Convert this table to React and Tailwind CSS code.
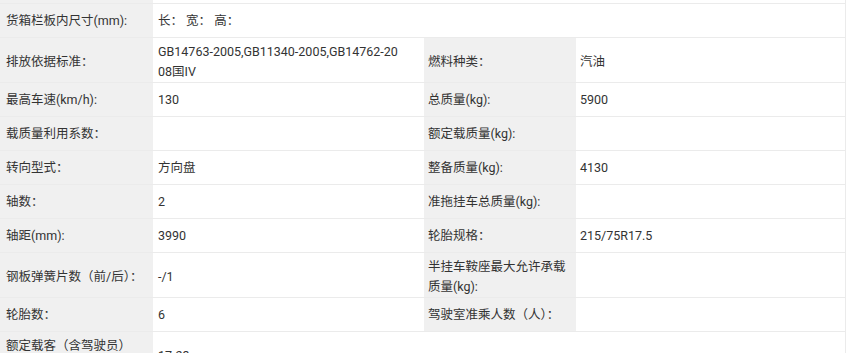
const rows = [
    { label: '货箱栏板内尺寸(mm):', value: '长： 宽： 高：', span: true },
    {
        label: '排放依据标准：',
        value: (
            <span className="whitespace-nowrap">
                GB14763-2005,GB11340-2005,GB14762-20
                <br />
                08国IV
            </span>
        ),
        label2: '燃料种类：',
        value2: '汽油',
        tall: true,
    },
    { label: '最高车速(km/h):', value: '130', label2: '总质量(kg):', value2: '5900' },
    { label: '载质量利用系数：', value: '', label2: '额定载质量(kg):', value2: '' },
    { label: '转向型式：', value: '方向盘', label2: '整备质量(kg):', value2: '4130' },
    { label: '轴数：', value: '2', label2: '准拖挂车总质量(kg):', value2: '' },
    { label: '轴距(mm):', value: '3990', label2: '轮胎规格：', value2: '215/75R17.5' },
    { label: '钢板弹簧片数（前/后）：', value: '-/1', label2: '半挂车鞍座最大允许承载质量(kg):', value2: '', tall: true },
    { label: '轮胎数：', value: '6', label2: '驾驶室准乘人数（人）：', value2: '' },
    { label: '额定载客（含驾驶员）(人):', value: '17-23', span: true, tall: true },
];

const App = () => {
    return (
        <div
            className="w-[852px] h-[353px] overflow-hidden bg-white text-[#333] text-[12.5px] leading-[20px]"
            style={{ fontFamily: 'Roboto, "Noto Sans CJK SC", sans-serif' }}
        >
            <div className="w-[846px] border-r border-[#ebebeb] grid grid-cols-[153px_271px_152px_269px]">
                {/* clipped previous row */}
                <div className="h-[4px] bg-[#f0f0f0] border-b border-[#ebebeb]" />
                <div className="h-[4px] col-span-3 border-b border-[#ebebeb]" />

                {rows.map((r, i) => {
                    const cell = `min-h-[34px] flex items-center border-b border-[#ebebeb] ${
                        r.tall ? 'pt-[4px] pb-0' : 'py-[2px]'
                    }`;
                    return (
                        <div key={i} className="contents">
                            <div className={`${cell} bg-[#f0f0f0] pl-[6px] pr-[4px]`}>{r.label}</div>
                            {r.span ? (
                                <div className={`${cell} col-span-3 pl-[5px] pr-[4px]`}>{r.value}</div>
                            ) : (
                                <>
                                    <div className={`${cell} pl-[5px] pr-[4px]`}>{r.value}</div>
                                    <div className={`${cell} bg-[#f0f0f0] pl-[4px] pr-[4px]`}>{r.label2}</div>
                                    <div className={`${cell} pl-[4px] pr-[4px]`}>{r.value2}</div>
                                </>
                            )}
                        </div>
                    );
                })}
            </div>
        </div>
    );
};

export default App;
